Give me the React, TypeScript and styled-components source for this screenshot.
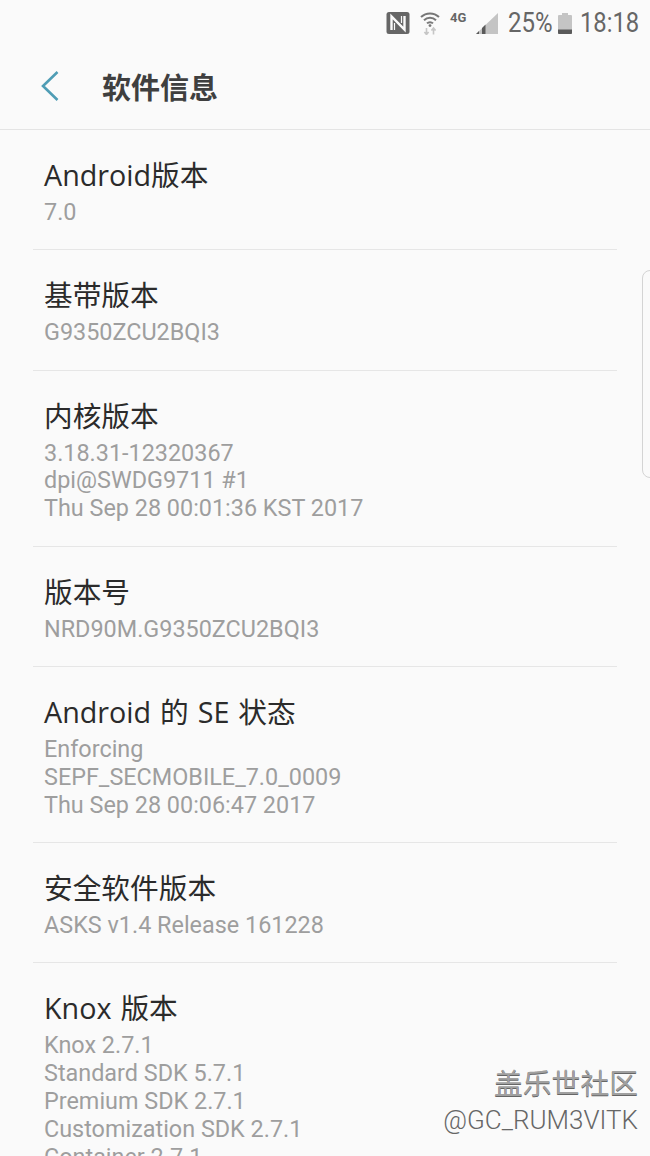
import React from 'react';
import styled, { createGlobalStyle } from 'styled-components';

const GlobalStyle = createGlobalStyle`
  html, body {
    margin: 0;
    padding: 0;
    background: #fafafa;
  }
  body {
    font-family: Roboto, "Noto Sans CJK SC", sans-serif;
  }
`;

type Info = {
  title: string;
  values: string[];
};

const items: Info[] = [
  { title: 'Android版本', values: ['7.0'] },
  { title: '基带版本', values: ['G9350ZCU2BQI3'] },
  {
    title: '内核版本',
    values: ['3.18.31-12320367', 'dpi@SWDG9711 #1', 'Thu Sep 28 00:01:36 KST 2017'],
  },
  { title: '版本号', values: ['NRD90M.G9350ZCU2BQI3'] },
  {
    title: 'Android 的 SE 状态',
    values: ['Enforcing', 'SEPF_SECMOBILE_7.0_0009', 'Thu Sep 28 00:06:47 2017'],
  },
  { title: '安全软件版本', values: ['ASKS v1.4 Release 161228'] },
  {
    title: 'Knox 版本',
    values: [
      'Knox 2.7.1',
      'Standard SDK 5.7.1',
      'Premium SDK 2.7.1',
      'Customization SDK 2.7.1',
      'Container 2.7.1',
    ],
  },
];

function NfcIcon() {
  return (
    <svg width="24" height="24" viewBox="0 0 24 24">
      <rect x="0.5" y="1" width="23" height="22" rx="2.5" fill="#666" />
      <path d="M5.5 19V5.5l13 13V5" fill="none" stroke="#fafafa" strokeWidth="2.4" />
      <path d="M8.5 19v-7M15.5 5v7" fill="none" stroke="#fafafa" strokeWidth="1.2" />
    </svg>
  );
}

function WifiIcon() {
  return (
    <svg width="20" height="24" viewBox="0 0 20 24" fill="none">
      <path d="M1 6a13 13 0 0 1 18 0" stroke="#777" strokeWidth="2" />
      <path d="M4 9.2a8.6 8.6 0 0 1 12 0" stroke="#777" strokeWidth="2" />
      <path d="M7 12.4a4.2 4.2 0 0 1 6 0" stroke="#777" strokeWidth="2" />
      <circle cx="10" cy="14.6" r="1.4" fill="#777" />
      <path d="M6.5 17v6.5M4.4 21 6.5 23.5 8.6 21M13.5 23.5V17M11.4 19.5 13.5 17l2.1 2.5" stroke="#c6c6c6" strokeWidth="1.6" />
    </svg>
  );
}

function SignalIcon() {
  return (
    <svg width="22" height="21" viewBox="0 0 22 21">
      <path d="M0 21 22 0v21z" fill="#c4c4c4" />
      <path d="M0 21l3-3v3zM6 21v-6l3.5-3.5V21z" fill="#5a5a5a" />
    </svg>
  );
}

function BatteryIcon() {
  return (
    <svg width="14" height="21" viewBox="0 0 14 21">
      <path d="M4 0h6v2h3a1 1 0 0 1 1 1v17a1 1 0 0 1-1 1H1a1 1 0 0 1-1-1V3a1 1 0 0 1 1-1h3z" fill="#c4c4c4" />
      <path d="M0 16.5h14V20a1 1 0 0 1-1 1H1a1 1 0 0 1-1-1z" fill="#5a5a5a" />
    </svg>
  );
}

export default function App() {
  return (
    <>
      <GlobalStyle />
      <Screen>
        <StatusBar>
          <NfcIcon />
          <WifiSlot>
            <WifiIcon />
          </WifiSlot>
          <NetworkLabel>4G</NetworkLabel>
          <SignalIcon />
          <Percent>25%</Percent>
          <BatteryIcon />
          <Clock>18:18</Clock>
        </StatusBar>
        <Header>
          <BackIcon width="20" height="32" viewBox="0 0 20 32" fill="none">
            <path d="M17.5 2 3 16l14.5 14" stroke="#4f9db5" strokeWidth="2.6" />
          </BackIcon>
          <Title>软件信息</Title>
        </Header>
        <List>
          {items.map(item => (
            <Row key={item.title}>
              <RowTitle>{item.title}</RowTitle>
              <RowValues>
                {item.values.map(value => (
                  <RowValue key={value}>{value}</RowValue>
                ))}
              </RowValues>
            </Row>
          ))}
        </List>
        <ScrollHandle />
        <Watermark>
          <WatermarkName>盖乐世社区</WatermarkName>
          <WatermarkUser>@GC_RUM3VITK</WatermarkUser>
        </Watermark>
      </Screen>
    </>
  );
}

const Screen = styled.div`
  position: relative;
  width: 650px;
  height: 1156px;
  overflow: hidden;
  background: #fafafa;
`;

const StatusBar = styled.div`
  height: 46px;
  box-sizing: border-box;
  padding: 0 12px 0 0;
  display: flex;
  align-items: center;
  justify-content: flex-end;
  color: #666;
`;

const WifiSlot = styled.div`
  display: flex;
  margin-left: 10px;
`;

const NetworkLabel = styled.span`
  align-self: flex-start;
  margin: 10px 0 0 10px;
  font-size: 13px;
  font-weight: 700;
  width: 26px;
`;

const Percent = styled.span`
  width: 44px;
  margin: 0 6px 0 10px;
  font-size: 27px;
  white-space: nowrap;
  transform: scaleX(0.89);
  transform-origin: left center;
`;

const Clock = styled.span`
  width: 58px;
  margin-left: 8px;
  font-size: 27px;
  white-space: nowrap;
  transform: scaleX(0.88);
  transform-origin: left center;
`;

const Header = styled.header`
  height: 84px;
  box-sizing: border-box;
  border-bottom: 1px solid #e4e4e4;
  padding: 0 0 3px 40px;
  display: flex;
  align-items: center;
`;

const BackIcon = styled.svg`
  flex: none;
`;

const Title = styled.h1`
  margin: 0 0 0 42px;
  font-size: 29px;
  font-weight: 700;
  color: #3f3f3f;
`;

const List = styled.div`
  padding: 0 33px;
`;

const Row = styled.div`
  box-sizing: border-box;
  padding: 25px 0 22.35px 11px;
  border-bottom: 1px solid #e6e6e6;
  &:last-child {
    border-bottom: none;
  }
`;

const RowTitle = styled.div`
  font-family: "Open Sans", "Noto Sans CJK SC", sans-serif;
  font-size: 28.7px;
  word-spacing: 1.5px;
  line-height: 40px;
  color: #2b2b2b;
`;

const RowValues = styled.div`
  margin-top: 4px;
`;

const RowValue = styled.div`
  font-size: 23.4px;
  line-height: 27.9px;
  color: #9e9e9e;
`;

const ScrollHandle = styled.div`
  position: absolute;
  top: 270px;
  left: 642px;
  width: 20px;
  height: 208px;
  box-sizing: border-box;
  border: 1px solid #d4d4d4;
  border-radius: 8px;
`;

const Watermark = styled.div`
  position: absolute;
  right: 12px;
  top: 1065px;
  display: flex;
  flex-direction: column;
  align-items: flex-end;
`;

const WatermarkName = styled.div`
  font-size: 28.8px;
  line-height: 38px;
  color: #a0a0a0;
  text-shadow: 0 1px 0 #666;
`;

const WatermarkUser = styled.div`
  margin-top: 1px;
  font-size: 26px;
  font-weight: 300;
  line-height: 32px;
  color: #666;
`;
